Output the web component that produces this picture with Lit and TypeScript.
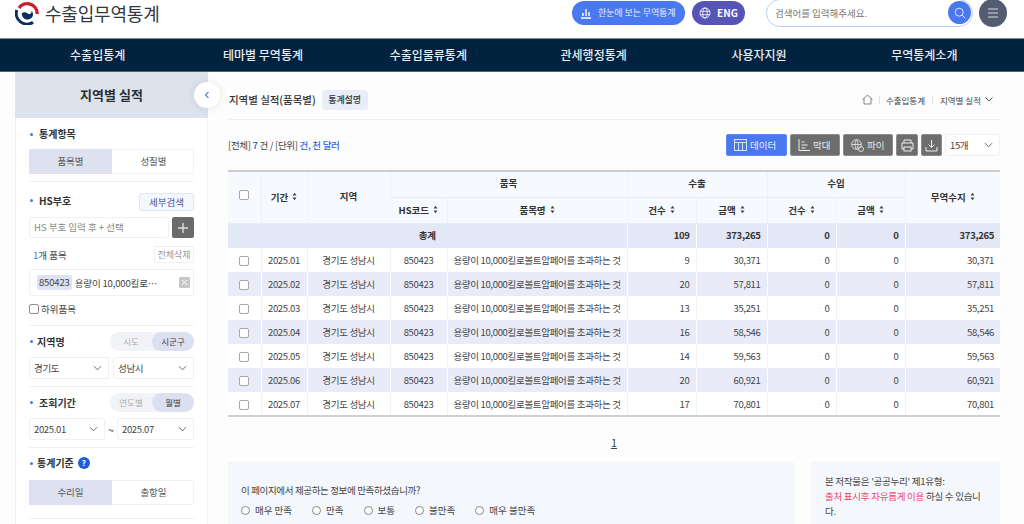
import { LitElement, html, css } from "lit";
import { customElement } from "lit/decorators.js";

const chev = html`<svg class="chev" viewBox="0 0 10 6" width="9" height="6"><path d="M1 1l4 4 4-4" fill="none" stroke="#666" stroke-width="1.1"/></svg>`;
const sort = html`<svg class="sort" viewBox="0 0 6 10" width="5" height="9"><path d="M3 0.5L5.4 3.7H.6zM3 9.5L.6 6.3h4.8z" fill="#444"/></svg>`;
const rows = [
  ["2025.01", "9", "30,371"],
  ["2025.02", "20", "57,811"],
  ["2025.03", "13", "35,251"],
  ["2025.04", "16", "58,546"],
  ["2025.05", "14", "59,563"],
  ["2025.06", "20", "60,921"],
  ["2025.07", "17", "70,801"],
];
const navItems = ["수출입통계", "테마별 무역통계", "수출입물류통계", "관세행정통계", "사용자지원", "무역통계소개"];
const ratings = ["매우 만족", "만족", "보통", "불만족", "매우 불만족"];

@customElement("app-root")
export class AppRoot extends LitElement {
  static styles = css`
    :host { display: block; width: 1024px; height: 524px; overflow: hidden; background: #fdfdfe; color: #333;
      font-family: "Noto Sans CJK KR", "Noto Sans", sans-serif; font-size: 10px; position: relative; }
    * { box-sizing: border-box; }
    svg { display: block; flex: none; }
    .header { height: 38px; display: flex; align-items: center; padding: 0 17px 13px 15px; background: #fff; }
    .logo { display: flex; align-items: center; gap: 6px; font-size: 18px; font-weight: 400; color: #33383e; letter-spacing: -0.2px; line-height: 24px; }
    .spacer { flex: 1; }
    .pill { height: 24px; border-radius: 12px; display: flex; align-items: center; color: #fff; }
    .pill.blue { width: 113px; background: #4a78ee; gap: 6px; padding-left: 8px; font-size: 9px; color: #e6edff; letter-spacing: -0.1px; }
    .pill.eng { width: 53px; margin-left: 7px; background: #5655b6; gap: 6px; padding-left: 7px; font-size: 10px; font-weight: 700; }
    .search { width: 207px; height: 28px; margin-left: 21px; border: 1px solid #bcd0f7; border-radius: 14px; background: #fff;
      display: flex; align-items: center; justify-content: space-between; padding: 0 1px 0 8px; font-size: 9.5px; color: #777; }
    .search .go { width: 23px; height: 23px; border-radius: 50%; background: #4a78ee; display: flex; align-items: center; justify-content: center; }
    .burger { width: 28px; height: 28px; margin-left: 6px; border-radius: 50%; background: #545c70; display: flex; align-items: center; justify-content: center; }
    .nav { height: 34px; background: #01233f; border-top: 1px solid #7d8d9c; border-bottom: 1px solid #4c6478; display: grid; grid-template-columns: repeat(6, 1fr); padding: 0 17px 0 15px; }
    .nav div { color: #e8edf1; font-size: 12px; font-weight: 500; text-align: center; line-height: 32px; }
    .body { display: flex; height: 452px; padding-left: 15px; }
    .side { width: 193px; flex: none; background: #fff; border-left: 1px solid #f1f2f4; border-right: 1px solid #f1f2f4; }
    .side h2 { margin: 0 -1px; height: 46px; background: #dde3ec; font-size: 13px; font-weight: 700; color: #2b2f33; text-align: center; line-height: 46px; }
    .sec { padding: 0 13px; }
    .sec + .sec > .inner { border-top: 1px solid #eef0f2; }
    .sec-t { display: flex; align-items: center; justify-content: space-between; }
    .lbl { font-size: 10px; font-weight: 700; color: #333; display: flex; align-items: center; gap: 6px; line-height: 14px; padding-left: 1px; }
    .lbl.near { gap: 4px; }
    .lbl.up { margin-bottom: 3px; }
    .lbl::before { content: ""; width: 3px; height: 3px; border-radius: 50%; background: #4a78ee; }
    .tabs { display: grid; grid-template-columns: 82px 83px; height: 25px; border: 1px solid #f0f1f3; border-radius: 2px; font-size: 9.5px; color: #555; text-align: center; line-height: 23px; }
    .tabs .on { background: #dde1f0; margin: -1px 0 -1px -1px; line-height: 25px; }
    .s1 { padding-top: 9px; height: 63px; }
    .s1 .lbl { margin-bottom: 8px; }
    .s2 { padding-top: 11px; height: 144px; }
    .small-btn { width: 55px; height: 18px; border: 1px solid #dfe6f6; background: #f4f7fd; border-radius: 3px; color: #40589a; font-size: 9.5px; text-align: center; line-height: 16px; }
    .inrow { display: flex; gap: 3px; margin-top: 6px; }
    .input { width: 140px; height: 21px; border: 1px solid #eff0f2; border-radius: 2px; color: #888; font-size: 9.5px; line-height: 19px; padding-left: 4px; background: #fff; }
    .plus { width: 22px; height: 21px; background: #6b6b6b; border-radius: 2px; display: flex; align-items: center; justify-content: center; }
    .cnt { display: flex; justify-content: space-between; align-items: center; margin-top: 8px; font-size: 9.5px; color: #444; padding-left: 4px; }
    .cnt b { color: #3f6fdc; font-weight: 400; }
    .del { width: 40px; height: 17px; border: 1px solid #eff0f2; border-radius: 2px; font-size: 9px; color: #999; text-align: center; line-height: 15px; }
    .item { height: 27px; margin-top: 6px; border: 1px solid #eff0f2; border-radius: 2px; display: flex; align-items: center; padding: 0 3px 0 7px; font-size: 9.5px; color: #444; white-space: nowrap; letter-spacing: -0.15px; }
    .code { background: #dde3f3; border-radius: 2px; padding: 0 2px; margin-right: 3px; line-height: 15px; }
    .x { margin-left: auto; width: 11px; height: 11px; background: #c8c8c8; border-radius: 1px; display: flex; align-items: center; justify-content: center; }
    .sub { display: flex; align-items: center; gap: 2px; margin-top: 6px; font-size: 9.5px; color: #444; line-height: 14px; }
    .cb { width: 10px; height: 10px; border: 1px solid #a8a8a8; border-radius: 2px; background: #fff; display: inline-block; flex: none; }
    .sub .cb { border-color: #8e8e8e; }
    .s3 .inner { padding-top: 6px; height: 61px; }
    .s3 { height: 61px; }
    .switch { width: 84px; height: 19px; border-radius: 10px; background: #f2f3f7; display: grid; grid-template-columns: 42px 42px; font-size: 8.5px; text-align: center; line-height: 19px; color: #aaa; }
    .switch .on { background: #dcdfef; border-radius: 10px; color: #444; }
    .sels { display: flex; justify-content: space-between; align-items: center; margin-top: 6px; }
    .sel { height: 22px; border: 1px solid #eff0f2; border-radius: 2px; background: #fff; display: flex; align-items: center; justify-content: space-between; padding: 0 6px 0 4px; font-size: 9.5px; color: #444; letter-spacing: -0.35px; }
    .s5 .inner { padding-top: 8px; height: 71px; }
    .s5 { height: 71px; }
    .s5 .lbl { margin-bottom: 10px; }
    .qm { width: 12px; height: 12px; border-radius: 50%; background: #1d5fd8; color: #fff; font-size: 8px; font-weight: 700; text-align: center; line-height: 12px; }
    .tail { border-top: 1px solid #eef0f2; margin: 0 13px; }
    .main { width: 772px; margin-left: 20px; flex: none; }
    .top { height: 48px; display: flex; align-items: center; border-bottom: 1px solid #eff0f2; padding: 8px 7px 0 1px; font-size: 10px; color: #333; }
    .top .ttl { font-size: 10.5px; font-weight: 500; letter-spacing: -0.05px; }
    .chip { margin-left: 6px; background: #e9edf8; border-radius: 3px; font-size: 9px; font-weight: 500; line-height: 20px; width: 46px; text-align: center; letter-spacing: -0.1px; }
    .crumb { display: flex; align-items: center; margin-left: auto; font-size: 8.5px; color: #444; }
    .crumb i { width: 1px; height: 8px; background: #e2e2e2; }
    .crumb .i1 { margin: 0 6px; }
    .crumb .i2 { margin: 0 7px; }
    .crumb .end { margin-left: 4px; }
    .bar { height: 50px; display: flex; align-items: center; justify-content: space-between; font-size: 9.5px; color: #444; letter-spacing: -0.3px; }
    .bar b { color: #2f66dd; font-weight: 500; }
    .tools { display: flex; align-items: center; gap: 3px; letter-spacing: 0; }
    .tb { height: 22px; border-radius: 2px; background: #6d6d6d; border: 1px solid #8b8b8b; color: #e8e8e8; display: flex; align-items: center; gap: 3px; padding-left: 7px; font-size: 9.5px; }
    .tb.ic { padding-left: 0; justify-content: center; }
    .tb.on { background: #4a78ee; border-color: #5d88f0; color: #e6edff; }
    table { border-collapse: collapse; table-layout: fixed; width: 772px; border-top: 2px solid #cbcbcb; border-bottom: 2px solid #d0d0d0; }
    th, td { border-left: 1px solid #eef1f5; padding: 0; overflow: hidden; white-space: nowrap; font-size: 9.5px; }
    th:first-child, td:first-child { border-left: 0; }
    thead th { background: #f6f9fd; font-weight: 700; color: #333; border-bottom: 1px solid #e9edf3; height: 26px; padding-bottom: 2px; }
    .th { display: inline-flex; align-items: center; gap: 4px; vertical-align: middle; }
    tbody td { height: 24px; color: #444; text-align: center; background: #fff; letter-spacing: -0.32px; }
    tbody tr:nth-child(odd) td { background: #e9ecf8; border-left-color: transparent; }
    tbody tr.total td { height: 25px; padding-bottom: 2px; background: #e3e8f6; font-weight: 700; color: #333; border-left-color: transparent; }
    td.r { text-align: right; padding-right: 6px; }
    td .cb { vertical-align: middle; }
    .pages { height: 45px; text-align: center; font-size: 11px; color: #444; line-height: 50px; }
    .pages span { text-decoration: underline; }
    .foot { display: flex; gap: 17px; }
    .fb { width: 566px; height: 70px; background: #f4f7fb; padding: 21px 13px 0; font-size: 9.5px; color: #444; letter-spacing: -0.35px; }
    .rates { display: flex; margin-top: 6px; gap: 20px; line-height: 14px; letter-spacing: 0; }
    .rates span { display: flex; align-items: center; gap: 5px; }
    .rd { width: 9px; height: 9px; border: 1px solid #888; border-radius: 50%; background: #fff; }
    .lic { width: 189px; height: 70px; background: #f4f7fb; padding: 12px 14px 0; font-size: 9.5px; line-height: 15px; color: #444; letter-spacing: -0.25px; }
    .lic em { font-style: normal; color: #e8476a; }
    .collapse { position: absolute; left: 194px; top: 82px; width: 26px; height: 26px; border-radius: 50%; background: #fff; box-shadow: 0 0 6px 3px rgba(0,0,0,.05); display: flex; align-items: center; justify-content: center; }
  `;

  render() {
    return html`
      <div class="header">
        <div class="logo">
          <svg width="24" height="24" viewBox="0 0 24 24">
            <path d="M4 7A10 10 0 0 1 22.200 13" fill="none" stroke="#c8202f" stroke-width="3.400"/>
            <path d="M1.800 9A10.700 10.700 0 0 0 18 21.200" fill="none" stroke="#0b2e5c" stroke-width="3"/>
            <path d="M6.800 13c.3 3.500 2.800 5.500 5.700 5.500 3.300 0 5.500-2.500 5.500-5.300 0-1.600-.7-2.700-1.500-3.300.2 1.900-.8 3.100-2.300 3.100-1.700 0-2.300-1.500-3.900-1.800-1.700-.3-3.600.4-3.500 1.800z" fill="#0b2e5c"/>
          </svg>
          수출입무역통계
        </div>
        <div class="spacer"></div>
        <div class="pill blue">
          <svg width="12" height="12" viewBox="0 0 12 12"><path d="M1 11h10M3 9V6M6 9V2M9 9V5" stroke="#fff" stroke-width="1.400" fill="none"/></svg>
          한눈에 보는 무역통계
        </div>
        <div class="pill eng">
          <svg width="12" height="12" viewBox="0 0 12 12" fill="none" stroke="#fff" stroke-width=".8"><circle cx="6" cy="6" r="5"/><ellipse cx="6" cy="6" rx="2.200" ry="5"/><path d="M1 4.300h10M1 7.700h10"/></svg>
          ENG
        </div>
        <div class="search">
          검색어를 입력해주세요.
          <div class="go"><svg width="12" height="12" viewBox="0 0 12 12" fill="none" stroke="#dfe8ff" stroke-width="1"><circle cx="5.200" cy="5.200" r="4"/><path d="M8.200 8.200l3 3"/></svg></div>
        </div>
        <div class="burger"><svg width="12" height="10" viewBox="0 0 12 10" stroke="#d8dbe2" stroke-width="1"><path d="M1 1h10M1 5h10M1 9h10"/></svg></div>
      </div>
      <div class="nav">${navItems.map((n) => html`<div>${n}</div>`)}</div>
      <div class="body">
        <div class="side">
          <h2>지역별 실적</h2>
          <div class="sec s1"><div class="lbl">통계항목</div>
            <div class="tabs"><div class="on">품목별</div><div>성질별</div></div></div>
          <div class="sec"><div class="inner s2">
            <div class="sec-t"><div class="lbl up">HS부호</div><div class="small-btn">세부검색</div></div>
            <div class="inrow"><div class="input">HS 부호 입력 후 + 선택</div>
              <div class="plus"><svg width="10" height="10" viewBox="0 0 10 10" stroke="#ddd" stroke-width="1.400"><path d="M5 0v10M0 5h10"/></svg></div></div>
            <div class="cnt"><span><b>1</b>개 품목</span><div class="del">전체삭제</div></div>
            <div class="item"><span class="code">850423</span>용량이 10,000킬로…
              <span class="x"><svg width="7" height="7" viewBox="0 0 7 7" stroke="#fff" stroke-width="1"><path d="M1 1l5 5M6 1l-5 5"/></svg></span></div>
            <div class="sub"><span class="cb"></span>하위품목</div>
          </div></div>
          <div class="sec s3"><div class="inner">
            <div class="sec-t"><div class="lbl near">지역명</div><div class="switch"><div>시도</div><div class="on">시군구</div></div></div>
            <div class="sels"><div class="sel" style="width:80px">경기도${chev}</div><div class="sel" style="width:81px">성남시${chev}</div></div>
          </div></div>
          <div class="sec s3"><div class="inner">
            <div class="sec-t"><div class="lbl">조회기간</div><div class="switch"><div>연도별</div><div class="on">월별</div></div></div>
            <div class="sels"><div class="sel" style="width:76px">2025.01${chev}</div><span>~</span><div class="sel" style="width:77px">2025.07${chev}</div></div>
          </div></div>
          <div class="sec s5"><div class="inner">
            <div class="lbl near">통계기준 <span class="qm">?</span></div>
            <div class="tabs"><div class="on">수리일</div><div>출항일</div></div>
          </div></div>
          <div class="tail"></div>
        </div>
        <div class="main">
          <div class="top">
            <span class="ttl">지역별 실적(품목별)</span><span class="chip">통계설명</span>
            <div class="crumb">
              <svg width="11" height="11" viewBox="0 0 11 11" fill="none" stroke="#666" stroke-width=".8"><path d="M.5 5.500L5.500 1l5 4.500M2 4.500V10h7V4.500"/></svg>
              <i class="i1"></i>수출입통계<i class="i2"></i>지역별 실적
              <svg class="end" width="8" height="5" viewBox="0 0 8 5"><path d="M.5.500L4 4 7.500.500" fill="none" stroke="#555"/></svg>
            </div>
          </div>
          <div class="bar">
            <div>[전체] <b>7</b> 건 / [단위] <b>건, 천 달러</b></div>
            <div class="tools">
              <div class="tb on" style="width:61px"><svg width="13" height="12" viewBox="0 0 13 12" fill="none" stroke="#e6edff" stroke-width=".9"><rect x=".5" y=".5" width="12" height="11"/><path d="M.5 3.500h12M4.500 3.500v8M8.500 3.500v8"/></svg>데이터</div>
              <div class="tb" style="width:50px"><svg width="12" height="12" viewBox="0 0 12 12" fill="none" stroke="#eee" stroke-width="1"><path d="M1 0v11.500h11M3.500 3h3M3.500 6h6M3.500 9h4"/></svg>막대</div>
              <div class="tb" style="width:50px"><svg width="13" height="13" viewBox="0 0 13 13" fill="none" stroke="#eee" stroke-width=".8"><circle cx="5.500" cy="5.500" r="4.800"/><path d="M.7 5.500h9.600M5.500.7c-2 3-2 6.600 0 9.600M5.500.7c2 3 2 6.600 0 9.600"/><circle cx="10" cy="10" r="2.500"/></svg>파이</div>
              <div class="tb ic" style="width:22px"><svg width="13" height="13" viewBox="0 0 13 13" fill="none" stroke="#eee" stroke-width="1"><path d="M3 4V1h7v3M3 10H1V4h11v6h-2"/><rect x="3" y="8" width="7" height="4"/></svg></div>
              <div class="tb ic" style="width:21px"><svg width="13" height="13" viewBox="0 0 13 13" fill="none" stroke="#eee" stroke-width="1"><path d="M6.500 1v7M3.500 5.500l3 3 3-3M1 8v4h11V8"/></svg></div>
              <div class="sel" style="width:55px">15개${chev}</div>
            </div>
          </div>
          <table>
            <colgroup><col style="width:33px"/><col style="width:46px"/><col style="width:83px"/><col style="width:57px"/><col style="width:180px"/><col style="width:69px"/><col style="width:71px"/><col style="width:69px"/><col style="width:69px"/><col style="width:95px"/></colgroup>
            <thead>
              <tr>
                <th rowspan="2"><span class="cb"></span></th>
                <th rowspan="2"><span class="th">기간${sort}</span></th>
                <th rowspan="2">지역</th>
                <th colspan="2">품목</th>
                <th colspan="2">수출</th>
                <th colspan="2">수입</th>
                <th rowspan="2"><span class="th">무역수지${sort}</span></th>
              </tr>
              <tr>
                <th><span class="th">HS코드${sort}</span></th>
                <th><span class="th">품목명${sort}</span></th>
                <th><span class="th">건수${sort}</span></th>
                <th><span class="th">금액${sort}</span></th>
                <th><span class="th">건수${sort}</span></th>
                <th><span class="th">금액${sort}</span></th>
              </tr>
            </thead>
            <tbody>
              <tr class="total"><td colspan="5">총계</td><td class="r">109</td><td class="r">373,265</td><td class="r">0</td><td class="r">0</td><td class="r">373,265</td></tr>
              ${rows.map(
                (r) => html`<tr>
                  <td><span class="cb"></span></td><td>${r[0]}</td><td>경기도 성남시</td><td>850423</td>
                  <td>용량이 10,000킬로볼트암페어를 초과하는 것</td>
                  <td class="r">${r[1]}</td><td class="r">${r[2]}</td><td class="r">0</td><td class="r">0</td><td class="r">${r[2]}</td>
                </tr>`
              )}
            </tbody>
          </table>
          <div class="pages"><span>1</span></div>
          <div class="foot">
            <div class="fb">이 페이지에서 제공하는 정보에 만족하셨습니까?
              <div class="rates">${ratings.map((x) => html`<span><i class="rd"></i>${x}</span>`)}</div>
            </div>
            <div class="lic">본 저작물은 '공공누리' 제1유형:<br/><em>출처 표시후 자유롭게 이용</em> 하실 수 있습니다.</div>
          </div>
        </div>
      </div>
      <div class="collapse"><svg width="6" height="8" viewBox="0 0 6 8"><path d="M4.500 1L1.500 4l3 3" fill="none" stroke="#5a82e6" stroke-width="1.200"/></svg></div>
    `;
  }
}
